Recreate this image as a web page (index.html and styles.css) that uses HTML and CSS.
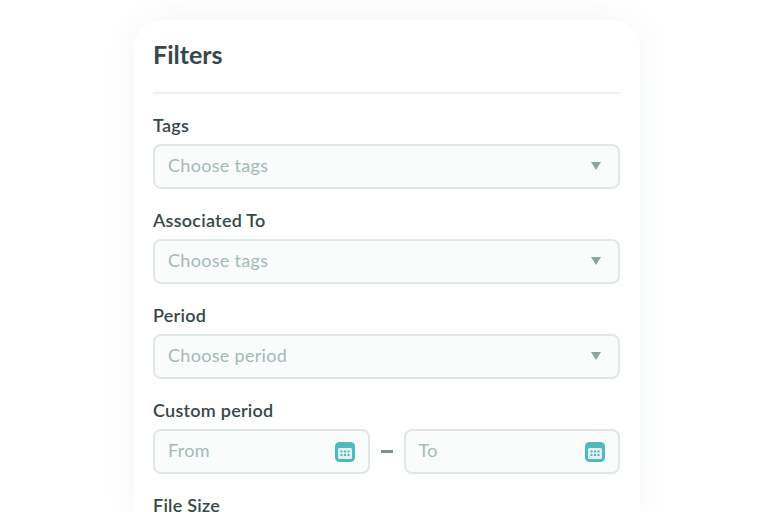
FILE: index.html
```html
<!DOCTYPE html>
<html lang="en">

<head>
  <meta charset="UTF-8">
  <title>Filters</title>
  <link rel="stylesheet" href="styles.css">
</head>

<body>
  <main class="card">
    <h1 class="card-title">Filters</h1>

    <div class="form-group">
      <label class="form-label">Tags</label>
      <div class="field">
        <span class="placeholder">Choose tags</span>
        <span class="caret"></span>
      </div>
    </div>

    <div class="form-group">
      <label class="form-label">Associated To</label>
      <div class="field">
        <span class="placeholder">Choose tags</span>
        <span class="caret"></span>
      </div>
    </div>

    <div class="form-group">
      <label class="form-label">Period</label>
      <div class="field">
        <span class="placeholder">Choose period</span>
        <span class="caret"></span>
      </div>
    </div>

    <div class="form-group">
      <label class="form-label">Custom period</label>
      <div class="date-range">
        <div class="field">
          <span class="placeholder">From</span>
          <svg class="cal-icon" width="20" height="20" viewBox="0 0 20 20">
            <rect x="0" y="0" width="20" height="20" rx="4.5" fill="#4fb9bd" />
            <rect x="3" y="6" width="14" height="11" rx="1.5" fill="#dff3f3" />
            <g fill="#5fb0b4">
              <rect x="5.5" y="8.5" width="2" height="2" />
              <rect x="9" y="8.5" width="2" height="2" />
              <rect x="12.5" y="8.5" width="2" height="2" />
              <rect x="5.5" y="12" width="2" height="2" />
              <rect x="9" y="12" width="2" height="2" />
              <rect x="12.5" y="12" width="2" height="2" />
            </g>
          </svg>
        </div>
        <span class="dash"></span>
        <div class="field">
          <span class="placeholder">To</span>
          <svg class="cal-icon" width="20" height="20" viewBox="0 0 20 20">
            <rect x="0" y="0" width="20" height="20" rx="4.5" fill="#4fb9bd" />
            <rect x="3" y="6" width="14" height="11" rx="1.5" fill="#dff3f3" />
            <g fill="#5fb0b4">
              <rect x="5.5" y="8.5" width="2" height="2" />
              <rect x="9" y="8.5" width="2" height="2" />
              <rect x="12.5" y="8.5" width="2" height="2" />
              <rect x="5.5" y="12" width="2" height="2" />
              <rect x="9" y="12" width="2" height="2" />
              <rect x="12.5" y="12" width="2" height="2" />
            </g>
          </svg>
        </div>
      </div>
    </div>

    <div class="form-group">
      <label class="form-label">File Size</label>
    </div>
  </main>
</body>

</html>
```

FILE: styles.css
```css
* {
  margin: 0;
  padding: 0;
  box-sizing: border-box;
}

html,
body {
  height: 512px;
  overflow: hidden;
}

body {
  font-family: Lato, Arial, sans-serif;
  background-color: #fff;
  color: #37474a;
}

/* Card, runs on past the bottom of the window so no lower corners */
.card {
  width: 506px;
  height: 492px;
  margin: 20px 0 0 134px;
  padding: 20px 20px 0 19px;
  background-color: #fff;
  border-radius: 28px 28px 0 0;
  box-shadow: 0px 0px 34px rgba(40, 60, 60, 0.06);
}

.card-title {
  height: 54px;
  font-size: 25px;
  font-weight: 700;
  line-height: 28px;
  border-bottom: 2px solid #eef1f1;
}

.form-group {
  margin-top: 21px;
}

.form-label {
  display: block;
  height: 22px;
  margin-bottom: 7px;
  font-size: 18px;
  font-weight: 600;
  line-height: 20px;
  letter-spacing: 0.25px;
}

/* Fields */
.field {
  display: flex;
  align-items: center;
  justify-content: space-between;
  flex: 1;
  height: 45px;
  padding: 0 13px 2px;
  background-color: #fafbfb;
  border: 2px solid #e0e8e7;
  border-radius: 8px;
}

.placeholder {
  margin-bottom: 2px;
  font-size: 18px;
  letter-spacing: 0.3px;
  color: #a3bab8;
}

.caret {
  width: 0;
  height: 0;
  margin-right: 4px;
  border-left: 5.5px solid transparent;
  border-right: 5.5px solid transparent;
  border-top: 8px solid #8ba5a5;
}

.date-range {
  display: flex;
  align-items: center;
}

.dash {
  width: 12px;
  height: 3px;
  margin: 0 11px;
  background-color: #808f90;
}

.cal-icon {
  margin-top: 2px;
}
```
